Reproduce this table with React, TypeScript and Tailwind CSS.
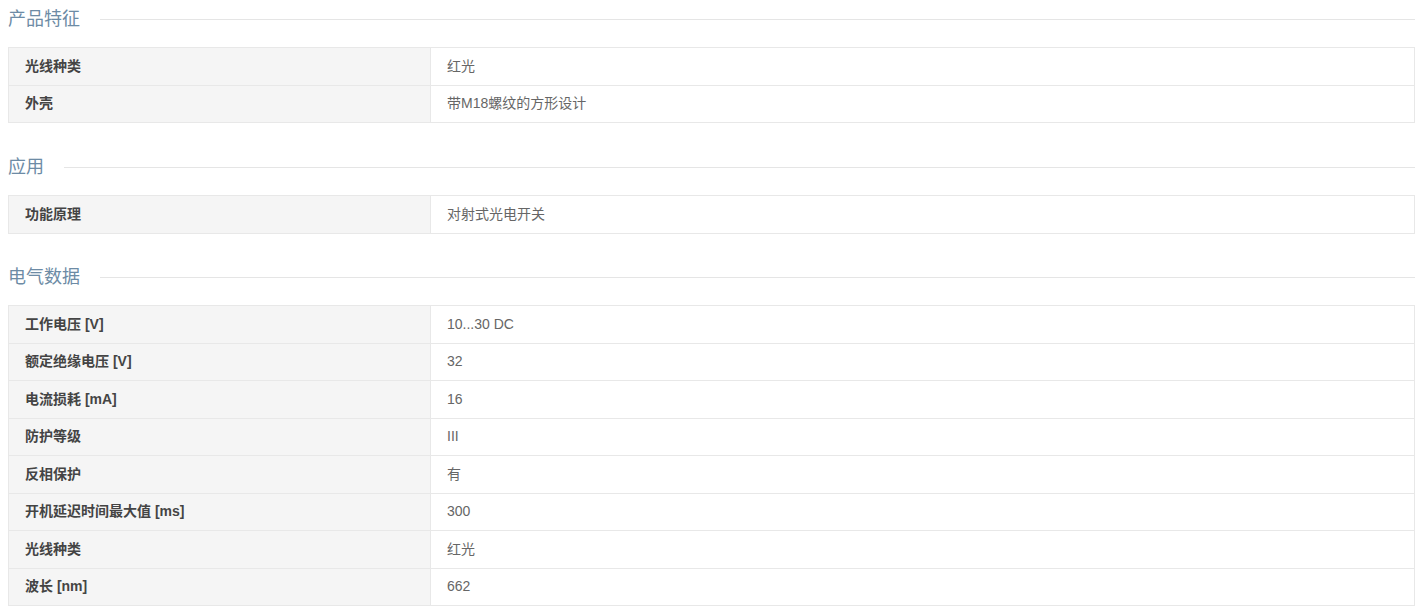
import React from 'react';

type Row = [string, string];

const SECTIONS: { title: string; rows: Row[]; top: string }[] = [
  {
    title: '产品特征',
    top: 'pt-[7px]',
    rows: [
      ['光线种类', '红光'],
      ['外壳', '带M18螺纹的方形设计'],
    ],
  },
  {
    title: '应用',
    top: 'pt-[32px]',
    rows: [['功能原理', '对射式光电开关']],
  },
  {
    title: '电气数据',
    top: 'pt-[31.5px]',
    rows: [
      ['工作电压 [V]', '10...30 DC'],
      ['额定绝缘电压 [V]', '32'],
      ['电流损耗 [mA]', '16'],
      ['防护等级', 'III'],
      ['反相保护', '有'],
      ['开机延迟时间最大值 [ms]', '300'],
      ['光线种类', '红光'],
      ['波长 [nm]', '662'],
    ],
  },
];

export default function App() {
  return (
    <div className="w-[1423px] h-[613px] overflow-hidden bg-white pl-2 pr-2 font-['Liberation_Sans','Noto_Sans_CJK_SC',sans-serif]">
      {SECTIONS.map((section) => (
        <div key={section.title} className={section.top}>
          <div className="flex items-center h-6">
            <h2 className="text-[18px] leading-6 text-[#6d8ba5] font-normal whitespace-nowrap">{section.title}</h2>
            <div className="flex-1 ml-5 h-px bg-[#e5e5e5]" />
          </div>
          <div className="mt-4 border border-[#e8e8e8] border-b-0 text-[14px]">
            {section.rows.map(([label, value], j) => (
              <div key={j} className="flex h-[37.5px] border-b border-[#e8e8e8]">
                <div className="w-[422px] shrink-0 bg-[#f5f5f5] border-r border-[#e8e8e8] flex items-center pl-[16px] font-bold text-[#444]">
                  {label}
                </div>
                <div className="flex-1 flex items-center pl-4 text-[#666]">{value}</div>
              </div>
            ))}
          </div>
        </div>
      ))}
    </div>
  );
}
